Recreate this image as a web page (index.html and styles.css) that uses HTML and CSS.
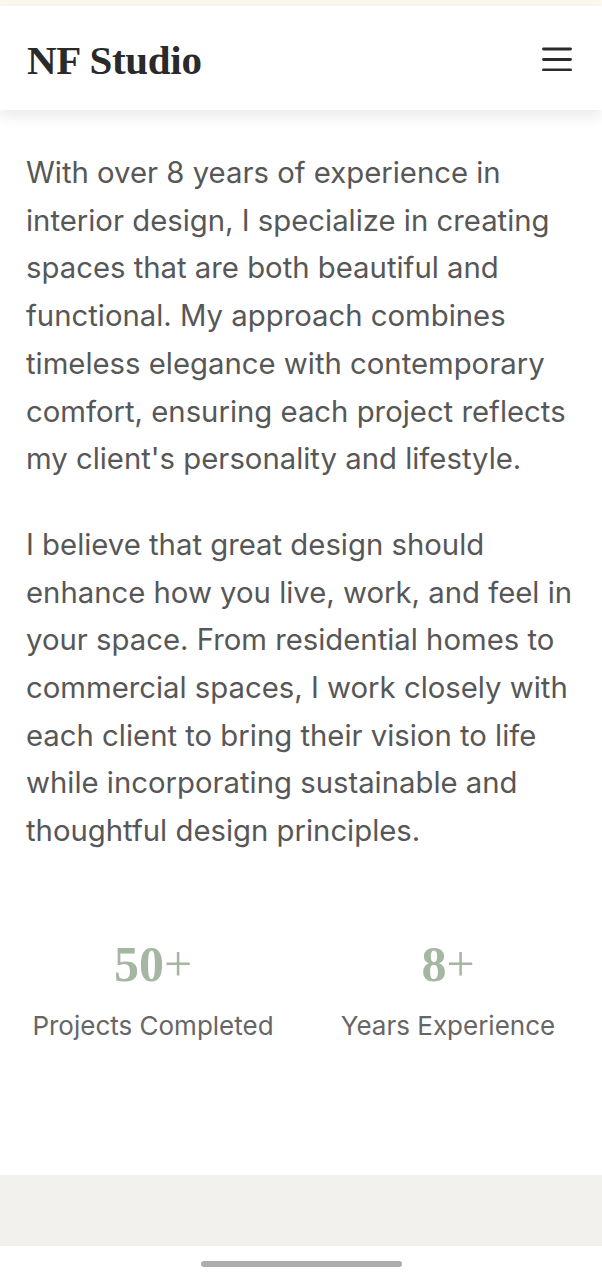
FILE: index.html
```html
<!DOCTYPE html>
<html lang="en">
<head>
<meta charset="utf-8">
<title>NF Studio</title>
<link rel="stylesheet" href="styles.css">
</head>
<body>
<div class="topstrip"></div>
<header class="header">
  <div class="logo">NF Studio</div>
  <button class="menu" aria-label="Menu">
    <svg width="30" height="24" viewBox="0 0 30 24"><path d="M1.5 2h27M1.5 12.5h27M1.5 23h27" stroke="#2a2a2a" stroke-width="2.8" stroke-linecap="round" fill="none"/></svg>
  </button>
</header>
<main class="about">
  <p class="para">With over 8 years of experience in interior design, I specialize in creating spaces that are both beautiful and functional. My approach combines timeless elegance with contemporary comfort, ensuring each project reflects my client's personality and lifestyle.</p>
  <p class="para">I believe that great design should enhance how you live, work, and feel in your space. From residential homes to commercial spaces, I work closely with each client to bring their vision to life while incorporating sustainable and thoughtful design principles.</p>
  <div class="stats">
    <div class="stat"><div class="num">50<span class="plus">+</span></div><div class="label">Projects Completed</div></div>
    <div class="stat"><div class="num">8<span class="plus">+</span></div><div class="label">Years Experience</div></div>
  </div>
</main>
<section class="footerband"></section>
<div class="homebar"><div class="indicator"></div></div>
</body>
</html>
```
FILE: styles.css
```css
* { box-sizing: border-box; }
html, body { margin: 0; padding: 0; background: #fff; }
body { font-family: "Inter", "Liberation Sans", sans-serif; width: 602px; }
.topstrip { height: 6px; background: #fdf7f0; }
.header {
  height: 104px;
  background: #fff;
  display: flex;
  align-items: center;
  justify-content: space-between;
  padding: 0 30px 0 27px;
  box-shadow: 0 6px 14px rgba(0,0,0,0.09);
  position: relative;
  z-index: 2;
}
.logo {
  font-family: "Liberation Serif", "DejaVu Serif", serif;
  font-weight: 700;
  font-size: 41px;
  color: #2a2a2a;
  letter-spacing: -0.3px;
  margin-top: 4px;
}
.menu { background: none; border: 0; padding: 0; display: flex; margin-top: 2px; }
.about { padding: 39px 26px 0 26px; height: 1065px; }
.para {
  margin: 0 0 38px 0;
  font-size: 29.3px;
  line-height: 47.7px;
  color: #575757;
}
.stats {
  display: grid;
  grid-template-columns: 252px 252px;
  column-gap: 43px;
  margin-left: 1px;
  margin-top: 81px;
}
.stat { display: flex; flex-direction: column; align-items: center; }
.num {
  font-family: "Liberation Serif", "DejaVu Serif", serif;
  font-weight: 700;
  font-size: 50px;
  line-height: 56px;
  color: #a5b7a2;
}
.plus { font-weight: 400; }
.label {
  margin-top: 17px;
  font-size: 26px;
  line-height: 34px;
  color: #666666;
}
.footerband { height: 71px; background: #f3f1ee; }
.homebar { height: 34px; display: flex; justify-content: center; padding-top: 15px; }
.indicator { width: 201px; height: 6px; border-radius: 3px; background: #acacac; }
```
